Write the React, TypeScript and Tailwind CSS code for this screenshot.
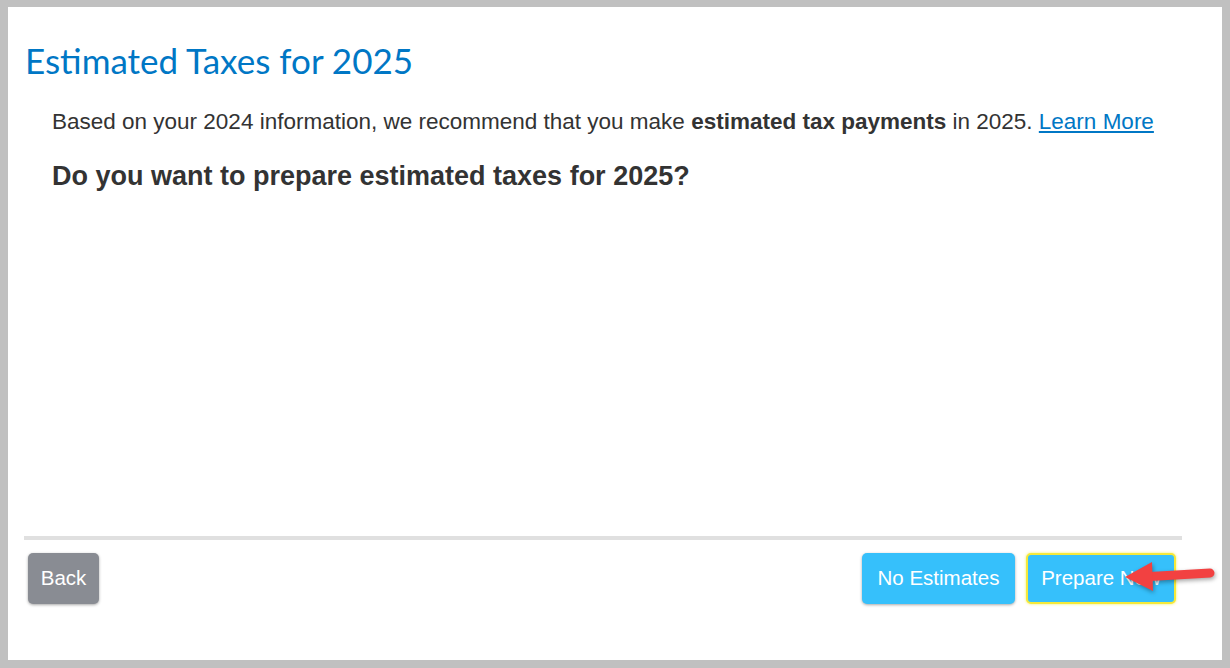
const App = () => {
  return (
    <div className="w-[1230px] h-[668px] bg-[#c0c0c0] pt-[7px] pl-[8px] pr-[8px] pb-[8px]">
      <div className="relative flex h-full flex-col bg-white">
        <h1 className="ml-[17px] mt-[32px] text-[35px] leading-[42px] text-[#0077c5] font-['Lato',sans-serif]">
          Estimated Taxes for 2025
        </h1>
        <div className="ml-[44px] pr-[40px] font-['Liberation_Sans',Arial,sans-serif] text-[#333333]">
          <p className="mt-[28px] text-[22.5px] leading-[26px]">
            Based on your 2024 information, we recommend that you make{" "}
            <b>estimated tax payments</b> in 2025.{" "}
            <a href="#" className="text-[#0077c5] underline">
              Learn More
            </a>
          </p>
          <p className="mt-[26px] text-[27px] leading-[30px] font-bold">
            Do you want to prepare estimated taxes for 2025?
          </p>
        </div>
        <div className="mt-auto ml-[16px] mr-[40px] h-[4px] bg-[#e0e0e0]" />
        <div className="flex items-center justify-between ml-[20px] mr-[46px] mt-[13px] mb-[56px] font-['Liberation_Sans',Arial,sans-serif] text-[20.5px] text-white">
          <button className="h-[51px] w-[71px] rounded-[5px] bg-[#898c93] shadow-[0_1px_3px_rgba(0,0,0,0.35)]">
            Back
          </button>
          <div className="flex gap-[11px]">
            <button className="h-[51px] w-[153px] rounded-[5px] bg-[#36c0fb] shadow-[0_1px_3px_rgba(0,0,0,0.35)]">
              No Estimates
            </button>
            <button className="h-[51px] w-[150px] rounded-[5px] border-2 border-[#f5e93a] bg-[#36c0fb] shadow-[0_0_3px_rgba(245,233,58,0.8)]">
              Prepare Now
            </button>
          </div>
        </div>
        <svg
          className="absolute left-[1104px] top-[544px] drop-shadow-[1px_2px_2px_rgba(0,0,0,0.35)]"
          width="106"
          height="46"
          viewBox="0 0 106 46"
        >
          <path d="M98 22 L38 25.5" stroke="#f24141" strokeWidth="9" strokeLinecap="round" fill="none" />
          <path d="M13 26 L40 11 L41 40 Z" fill="#f24141" strokeLinejoin="round" />
        </svg>
      </div>
    </div>
  );
};

export default App;
